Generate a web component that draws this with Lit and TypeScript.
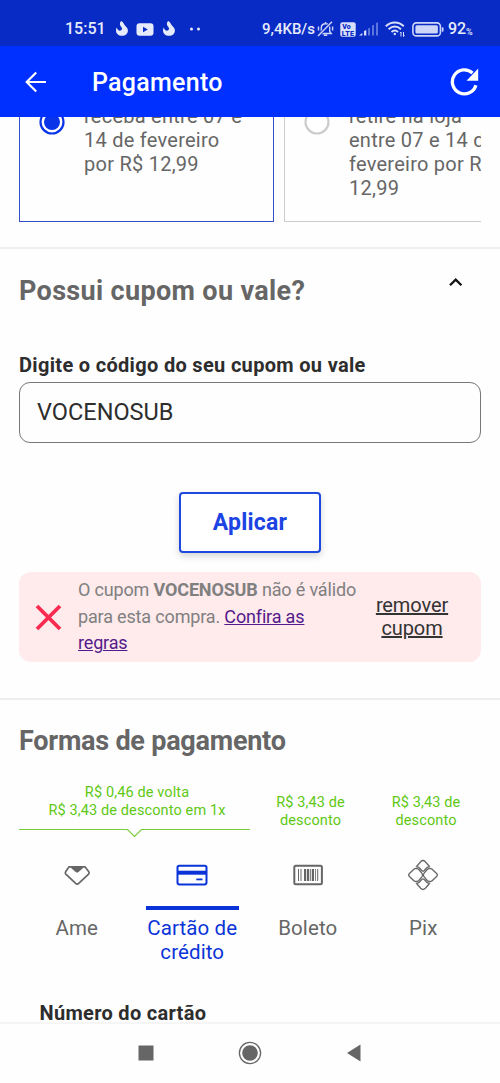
import { LitElement, html, css, svg } from "lit";
import { customElement } from "lit/decorators.js";

const flame = html`<svg class="flame" width="14" height="17" viewBox="0 0 14 17">
  <path fill="#e6ebfb" d="M6.200 1C8.600 2.400 8.700 4.200 10.200 5.700 11.900 7.300 12.900 8.500 12.900 10.400 12.900 13.600 10.400 15.800 7 15.800 3.500 15.800 1 13.600 1 10.500 1 9.300 1.300 8.400 1.900 7.600 2.200 8.900 2.700 10.200 4 10.600 5.700 11 7.300 9.800 7 8.200 6.700 6.500 4.600 5.700 4.900 3.400 5 2.400 5.500 1.600 6.200 1z"/>
</svg>`;

const pixPetal = (angle: number) => svg`<path transform="rotate(${angle} 16 16)"
  d="M8.700 7.800h1.500q1.200.1 2 1l2.500 2.700q1.300 1.300 2.600 0l2.500-2.700q.8-.9 2-1h1.500M9.700 7.300l4-4.600q2.300-2.400 4.600 0l4 4.600"/>`;

@customElement("app-root")
export class AppRoot extends LitElement {
  static styles = css`
    :host { display: block; width: 500px; height: 1083px; overflow: hidden; background: #fefefe;
      font-family: Roboto, "Noto Sans", sans-serif; color: #666; }
    * { box-sizing: border-box; }
    .screen { display: flex; flex-direction: column; height: 1083px; }
    svg { display: block; flex: none; }
    .status { height: 46px; flex: none; background: #082bc6; display: flex; justify-content: space-between;
      padding: 12px 27px 0 65px; color: #e6ebfb; font-size: 16px; font-weight: 500; line-height: 34px; }
    .side { display: flex; align-items: center; height: 34px; white-space: nowrap; }
    .time { width: 50px; }
    .flame { margin-top: -1px; }
    .tube { margin: 0 8px 0 7px; }
    .dots { margin-left: 13px; }
    .rate { width: 55px; font-size: 15px; }
    .volte, .wifi, .battery { margin-left: 6px; }
    .signal { margin-left: 3px; }
    .pct { font-size: 16px; width: 18px; margin-left: 4px; }
    .sign { font-size: 9px; padding-top: 5px; width: 7px; }
    .bar { height: 71px; flex: none; background: #0030ff; display: flex; align-items: center; color: #fff;
      padding: 0 20px 0 24px; }
    .title { flex: 1; margin: 3px 0 0 44px; font-size: 25px; font-weight: 500; line-height: 30px; letter-spacing: .28px; }
    .content { flex: none; height: 905px; overflow: hidden; display: flex; flex-direction: column; }
    .delivery { display: flex; align-items: flex-end; gap: 10px; height: 105px; flex: none; margin: 0 19px; overflow: hidden; }
    .option { width: 255px; flex: none; border: 1px solid #ccc; display: flex; align-items: flex-start; height: 130px;
      padding: 11px 0 0 19px; font-size: 20px; line-height: 24px; letter-spacing: .25px; white-space: nowrap; }
    .option.on { border-color: #3450c8; }
    .option svg { margin: 5px 19px 0 0; }
    .rule { height: 2px; flex: none; background: #eee; margin-top: 25px; }
    .heading { display: flex; justify-content: space-between; align-items: flex-start; height: 32px; flex: none;
      margin: 26px 36px 0 19px; font-size: 27px; line-height: 32px; font-weight: 700; letter-spacing: .34px; }
    .label { margin: 46px 0 0 19px; height: 24px; flex: none; font-size: 20px; line-height: 24px; font-weight: 700; color: #2d2d2d;
      letter-spacing: .32px; }
    .input { margin: 5px 19px 0; height: 61px; flex: none; border: 1px solid #777; border-radius: 11px;
      padding: 0 17px; font-size: 23.500px; line-height: 59px; color: #2d2d2d; }
    .apply { align-self: center; width: 142px; height: 61px; flex: none; margin-top: 49px; border: 2px solid #1f48dd; border-radius: 4px;
      background: #fff; color: #1c43e3; font: 700 23px/57px Roboto, sans-serif; letter-spacing: .2px; text-align: center;
      box-shadow: 0 3px 7px rgba(0,0,0,.17); }
    .alert { margin: 19px 19px 0; height: 90px; flex: none; border-radius: 12px; background: #ffeaec; display: flex; align-items: center;
      padding-left: 16px; }
    .msg { margin-left: 16px; width: 287px; font-size: 18px; line-height: 26.600px; color: #808080; white-space: nowrap;
      letter-spacing: -.16px; }
    .msg a { color: #551a8b; text-decoration: underline; }
    .remove { width: 94px; text-align: center; font-size: 20px; line-height: 23px; color: #333; text-decoration: underline;
      letter-spacing: -.1px; }
    .rule.gap { margin-top: 36px; height: 2px; }
    .payhead { margin-top: 25px; letter-spacing: -.24px; }
    .promos { display: grid; grid-template-columns: 231px 116px 115px; margin: 26px 0 0 19px; height: 56px; flex: none;
      color: #5ec814; font-size: 14.500px; line-height: 18px; letter-spacing: .12px; text-align: center; white-space: nowrap; }
    .promo { padding: 11px 0 0 5px; }
    .promo.wide { padding: 1px 0 0; }
    .promo.wide span { display: block; padding-left: 5px; height: 44px; }
    .tabs { display: grid; grid-template-columns: repeat(4, 115.500px); margin: 20px 0 0 19px; height: 107px; flex: none;
      font-size: 20.500px; line-height: 24px; letter-spacing: .1px; text-align: center; }
    .tab { display: flex; flex-direction: column; align-items: center; }
    .mark { width: 93px; height: 4px; margin: 15px 0 6px; }
    .sel { color: #0a34d8; }
    .sel .mark { background: #0a34d8; }
    .number { margin: 35px 0 0 39.500px; font-size: 20px; line-height: 24px; font-weight: 700; color: #2d2d2d; white-space: nowrap;
      letter-spacing: .3px; }
    .nav { flex: 1; border-top: 2px solid #f5f5f5; display: flex; justify-content: center; align-items: center; gap: 84px;
      padding: 0 1px 1px 0; }
  `;

  render() {
    return html`<div class="screen">
      <div class="status">
        <div class="side">
          <span class="time">15:51</span>${flame}
          <svg class="tube" width="18" height="13" viewBox="0 0 18 13"><rect x=".5" y=".3" width="17" height="12.400" rx="3" fill="#e6ebfb"/><path d="M7 3.700v5.600l4.800-2.800z" fill="#082bc6"/></svg>
          ${flame}
          <svg class="dots" width="12" height="4" viewBox="0 0 12 4" fill="#e6ebfb"><circle cx="2.500" cy="2" r="1.500"/><circle cx="9.500" cy="2" r="1.500"/></svg>
        </div>
        <div class="side">
          <span class="rate">9,4KB/s</span>
          <svg width="17" height="16" viewBox="0 0 17 16" fill="none" stroke="#cdd5f8" stroke-width="1.400">
            <path d="M4.300 11V7c0-2.400 1.700-4.200 4.200-4.200 2.600 0 4.200 1.800 4.200 4.200v3.500l1.500 2H3zM8.500 1v1.800M6.800 14.300h3.400M1.500 5.500v4M15.600 5.500v4"/><path d="M15 .8L1 15" stroke="#082bc6" stroke-width="3"/><path d="M15 .8L1 15"/>
          </svg>
          <svg class="volte" width="16" height="15" viewBox="0 0 16 15"><rect x=".3" y=".3" width="15.400" height="14.400" rx="2" fill="#d8dffa"/>
            <g fill="#082bc6" font-family="Roboto" font-weight="900" font-size="7"><text x="2.300" y="6.600" textLength="8.500">Vo</text><text x="1.800" y="13.500" textLength="12.200">LTE</text></g></svg>
          <svg class="signal" width="20" height="14" viewBox="0 0 20 14" fill="#dbe1fb"><path d="M0 13.500l3.300-2.500v2.500zM5 9l2.300-.9v5.400H5z"/><path fill="#5d76df" d="M9 6.500l2-.7v7.700H9zM13 3.500l2-.7v10.700h-2zM17 1l2-.7v13.200h-2z"/></svg>
          <svg class="wifi" width="21" height="16" viewBox="0 0 21 16" fill="none" stroke="#d8dffa" stroke-width="1.900"><path d="M.8 5.200c5.400-4.900 12.600-4.900 18 0M3.600 8.200c3.900-3.400 8.500-3.400 12.400 0M6.500 11c2.100-1.800 4.500-1.800 6.600 0"/><circle cx="9.800" cy="13" r="1.200" fill="#d8dffa" stroke="none"/><path stroke-width="1" d="M16 11v4.500M18.500 11v4.500M15 12.300l1-1.300M19.500 14.200l-1 1.300"/></svg>
          <svg class="battery" width="32" height="15" viewBox="0 0 32 15"><rect x=".9" y=".9" width="27.500" height="13" rx="3.500" fill="none" stroke="#cdd5f8" stroke-width="1.600"/><rect x="3.400" y="3.300" width="22.500" height="8.200" rx="1.500" fill="#cdd5f8"/><path fill="#cdd5f8" d="M29.800 5.200h.7q1 0 1 1v2.600q0 1-1 1h-.7z"/></svg>
          <span class="pct">92</span><span class="sign">%</span>
        </div>
      </div>
      <div class="bar">
        <svg width="24" height="22" viewBox="0 0 24 22" fill="none" stroke="#fff" stroke-width="2.200"><path d="M22 11H3M12.200 1.500L2.700 11l9.500 9.500"/></svg>
        <div class="title">Pagamento</div>
        <svg width="30" height="30" viewBox="0 0 30 30"><path d="M25.900 18.200A12 12 0 1 1 22.500 6" fill="none" stroke="#fff" stroke-width="3.300"/><path fill="#fff" d="M28.200 1.500v12.300H16.500z"/></svg>
      </div>
      <div class="content">
        <div class="delivery">
          <div class="option on">
            <svg width="26" height="26" viewBox="0 0 26 26"><circle cx="13" cy="13" r="11.500" fill="#fff" stroke="#0a34e8" stroke-width="2.200"/><circle cx="13" cy="13" r="8" fill="#0a34e8"/></svg>
            <div>receba entre 07 e<br>14 de fevereiro<br>por R$ 12,99</div>
          </div>
          <div class="option">
            <svg width="26" height="26" viewBox="0 0 26 26"><circle cx="13" cy="13" r="11.500" fill="#fff" stroke="#ccc" stroke-width="2.200"/></svg>
            <div>retire na loja<br>entre 07 e 14 de<br>fevereiro por R$<br>12,99</div>
          </div>
        </div>
        <div class="rule"></div>
        <div class="heading"><span>Possui cupom ou vale?</span>
          <svg width="17" height="14" viewBox="0 0 17 14"><path d="M3 10.200l5.700-5.600 5.700 5.600" fill="none" stroke="#111" stroke-width="2.300"/></svg></div>
        <div class="label">Digite o código do seu cupom ou vale</div>
        <div class="input">VOCENOSUB</div>
        <div class="apply">Aplicar</div>
        <div class="alert">
          <svg width="27" height="27" viewBox="0 0 27 27"><path d="M2 2l23 23M25 2L2 25" stroke="#fa2a50" stroke-width="3.800"/></svg>
          <div class="msg">O cupom <b>VOCENOSUB</b> não é válido<br>para esta compra. <a>Confira as<br>regras</a></div>
          <div class="remove">remover cupom</div>
        </div>
        <div class="rule gap"></div>
        <div class="heading payhead">Formas de pagamento</div>
        <div class="promos">
          <div class="promo wide"><span>R$ 0,46 de volta<br>R$ 3,43 de desconto em 1x</span>
            <svg width="231" height="10" viewBox="0 0 231 10"><path d="M0 1.500h108.500l7 6.900 7-6.900H231" fill="none" stroke="#79cc3c" stroke-width="1.200"/></svg></div>
          <div class="promo">R$ 3,43 de<br>desconto</div>
          <div class="promo">R$ 3,43 de<br>desconto</div>
        </div>
        <div class="tabs">
          <div class="tab"><svg width="32" height="32" viewBox="0 0 32 32"><path d="M8 7.800h16l3.800 5q.8 1.200-.2 2.300l-9.900 9.300q-1.500 1.300-3 0l-9.900-9.300q-1-1.100-.2-2.300z" fill="none" stroke="#666" stroke-width="1.700"/><path d="M10.300 7.500h11.500v1.700L17.500 13q-1.400 1-2.800 0l-4.400-3.800z" fill="#666"/></svg><i class="mark"></i>Ame</div>
          <div class="tab sel"><svg width="32" height="32" viewBox="0 0 32 32"><rect x="1.500" y="6.700" width="29" height="18.700" rx="1.800" fill="none" stroke="#0a34d8" stroke-width="2"/><path d="M1.500 13.700h29" stroke="#0a34d8" stroke-width="4"/><path d="M20.300 20.400h6.200" stroke="#0a34d8" stroke-width="1.800"/></svg><i class="mark"></i>Cartão de<br>crédito</div>
          <div class="tab"><svg width="32" height="32" viewBox="0 0 32 32"><rect x="2.300" y="6.800" width="27.600" height="18.400" rx="1.500" fill="none" stroke="#666" stroke-width="2"/><path fill="#666" d="M6 10h1v12H6zM8.500 10h1v12h-1zM12 10h2.200v12H12zM15 10h2.200v12H15zM18.200 10h1v12h-1zM20 10h2v12h-2zM23.200 10h.8v12h-.8zM25.200 10h1v12h-1z"/></svg><i class="mark"></i>Boleto</div>
          <div class="tab"><svg width="32" height="32" viewBox="0 0 32 32" fill="none" stroke="#666" stroke-width="1.300">${[0, 180].map(pixPetal)}
            <path d="M8.300 9.700H10q1 0 1.800.8l3.200 3.900q1.200 1.600 0 3.200l-3.200 3.900q-.8.800-1.800.8H8.300q-1 0-1.700-.8l-4.200-4q-1.500-1.500 0-3l4.200-4q.7-.8 1.700-.8z"/><path d="M23.700 9.700H22q-1 0-1.800.8L17 14.400q-1.200 1.600 0 3.200l3.200 3.900q.8.800 1.800.8h1.700q1 0 1.700-.8l4.200-4q1.500-1.500 0-3l-4.200-4q-.7-.8-1.700-.8z"/></svg><i class="mark"></i>Pix</div>
        </div>
        <div class="number">Número do cartão</div>
      </div>
      <div class="nav">
        <svg width="16" height="16"><rect width="15" height="15" x=".5" y=".5" fill="#666"/></svg>
        <svg width="24" height="24" viewBox="0 0 24 24"><circle cx="12" cy="12" r="10.600" fill="none" stroke="#666" stroke-width="1.300"/><circle cx="12" cy="12" r="7.800" fill="#666"/></svg>
        <svg width="16" height="18" viewBox="0 0 16 18"><path d="M1 9l13.500-8.500v17z" fill="#666"/></svg>
      </div>
    </div>`;
  }
}
